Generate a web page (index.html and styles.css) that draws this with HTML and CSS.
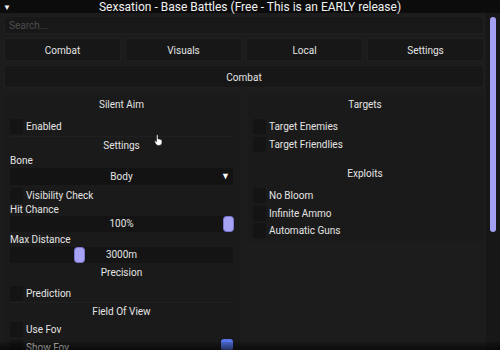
FILE: index.html
```html
<!DOCTYPE html>
<html>
<head>
    <title>Sexsation</title>
    <link rel="stylesheet" href="styles.css">
</head>
<body>
    <div id="window">
        <div id="titleBar">
            <span class="arrow">▼</span>
            <span class="title">Sexsation - Base Battles (Free - This is an EARLY release)</span>
            <span></span>
        </div>
        <div id="mainDiv">
            <div id="content">
                <div id="searchBox">Search...</div>
                <div id="tabs">
                    <div class="tab">Combat</div>
                    <div class="tab">Visuals</div>
                    <div class="tab">Local</div>
                    <div class="tab">Settings</div>
                </div>
                <div id="pageHeader">Combat</div>
                <div id="columns">
                    <div class="column">
                        <div class="head">Silent Aim</div>
                        <div class="check first"><span class="box"></span>Enabled</div>
                        <div class="sub">Settings</div>
                        <div class="label bone">Bone</div>
                        <div class="dropdown"><span></span><span>Body</span><span class="drop">▼</span></div>
                        <div class="check first"><span class="box"></span>Visibility Check</div>
                        <div class="label hit">Hit Chance</div>
                        <div class="slider">100%<span class="knob" style="left: 214px"></span></div>
                        <div class="label">Max Distance</div>
                        <div class="slider">3000m<span class="knob" style="left: 65px"></span></div>
                        <div class="sub precision">Precision</div>
                        <div class="check first tall"><span class="box"></span>Prediction</div>
                        <div class="sub tall">Field Of View</div>
                        <div class="check tall"><span class="box"></span>Use Fov</div>
                        <div class="check tall"><span class="box"></span>Show Fov<span class="swatch"></span></div>
                    </div>
                    <div class="column right">
                        <div class="head">Targets</div>
                        <div class="check first"><span class="box"></span>Target Enemies</div>
                        <div class="check"><span class="box"></span>Target Friendlies</div>
                        <div class="head exploits">Exploits</div>
                        <div class="check first"><span class="box"></span>No Bloom</div>
                        <div class="check"><span class="box"></span>Infinite Ammo</div>
                        <div class="check"><span class="box"></span>Automatic Guns</div>
                    </div>
                </div>
            </div>
            <div id="scrollTrack">
                <div id="scrollThumb"></div>
            </div>
        </div>
        <svg id="cursor" width="9" height="12" viewBox="0 0 9 12">
            <path d="M2.5 1 Q3.5 0.3 4 1 L4 5 L5 5 Q6 4.8 6.3 5.5 L7 5.6 Q8 5.8 8 7 L8 9 Q7.5 11.5 5 11.5 L4 11.5 Q2.5 11.3 1.5 9.5 L0.6 7.5 Q0.5 6.6 1.5 6.8 L2.5 7.8 Z" fill="#ffffff" stroke="#222" stroke-width="0.6"/>
        </svg>
        <div id="fade"></div>
    </div>
</body>
</html>
```

FILE: styles.css
```css
body{
    margin: 0px;
    background-color: #000000;
    font-family: Roboto, "Liberation Sans", Arial, sans-serif;
    font-size: 10px;
    color: #e4e4e4;
}

#window{
    position: relative;
    width: 500px;
    height: 350px;
    overflow: hidden;
    background-color: #1c1c1c;
}

#titleBar{
    display: grid;
    grid-template-columns: 1fr auto 1fr;
    align-items: center;
    height: 13px;
    background-color: #0c0c0c;
}

.arrow{
    font-size: 8px;
    padding-left: 3px;
    color: #f2f2f2;
}

.title{
    font-size: 12px;
    color: #f0f0f0;
}

#mainDiv{
    display: flex;
    flex-direction: row;
}

#content{
    width: 480px;
    padding: 0px 2px 0px 4px;
}

#searchBox{
    height: 18px;
    margin-top: 3px;
    padding-left: 4px;
    line-height: 18px;
    color: #4c4c4c;
    background-color: #181818;
    border: 1px solid #1f1f1f;
    box-sizing: border-box;
}

#tabs{
    display: grid;
    grid-template-columns: repeat(4, 1fr);
    gap: 4px;
    margin-top: 4px;
}

.tab{
    height: 23px;
    line-height: 23px;
    text-align: center;
    background-color: #171717;
    border: 1px solid #1f1f1f;
    box-sizing: border-box;
}

#pageHeader{
    height: 23px;
    margin-top: 4px;
    line-height: 23px;
    text-align: center;
    background-color: #171717;
    border: 1px solid #1f1f1f;
    box-sizing: border-box;
}

#columns{
    display: grid;
    grid-template-columns: 236px 1fr;
    gap: 7px;
    align-items: start;
    margin-top: 6px;
}

.column{
    display: flex;
    flex-direction: column;
    padding: 0px 7px 0px 6px;
    background-color: #1a1a1a;
}

.column.right{
    padding-bottom: 2px;
}

.head{
    height: 22px;
    line-height: 22px;
    text-align: center;
}

.head.exploits{
    margin-top: 10px;
}

.check{
    display: flex;
    flex-direction: row;
    align-items: center;
    gap: 3px;
    height: 17.5px;
}

.check.first{
    margin-top: 2px;
}

.check.tall{
    height: 18px;
}

.box{
    width: 13px;
    height: 15px;
    background-color: #141414;
}

.sub{
    height: 17px;
    line-height: 17px;
    text-align: center;
    border-top: 1px solid #202020;
    box-sizing: border-box;
}

.sub.precision{
    height: 18px;
    line-height: 18px;
    margin-top: 1px;
    border-top: none;
}

.sub.tall{
    height: 18px;
    line-height: 18px;
}

.label{
    height: 15px;
    line-height: 15px;
}

.label.hit{
    height: 12px;
    line-height: 12px;
}

.dropdown{
    display: grid;
    grid-template-columns: 1fr auto 1fr;
    align-items: center;
    height: 17px;
    text-align: center;
    background-color: #131313;
}

.drop{
    justify-self: end;
    padding-right: 3px;
    font-size: 9px;
    color: #ffffff;
}

.slider{
    position: relative;
    height: 16px;
    line-height: 16px;
    text-align: center;
    background-color: #141414;
}

.knob{
    position: absolute;
    top: 1px;
    width: 9px;
    height: 14px;
    border-radius: 3px;
    background-color: #a6a2f4;
    box-shadow: 0px 0px 0px 1px #7c78d0;
}

.swatch{
    align-self: flex-start;
    width: 12px;
    height: 12px;
    margin-left: auto;
    margin-top: 1px;
    border-radius: 3px;
    background-color: #5675ea;
}

#scrollTrack{
    width: 14px;
    height: 337px;
    background-color: #171717;
}

#scrollThumb{
    width: 6px;
    height: 215px;
    margin: 4px 0px 0px 4px;
    border-radius: 3px;
    background-color: #a39ff2;
}

#cursor{
    position: absolute;
    left: 154px;
    top: 134px;
}

#fade{
    position: absolute;
    left: 0px;
    bottom: 0px;
    width: 500px;
    height: 8px;
    background: linear-gradient(to bottom, rgba(0, 0, 0, 0.15), rgba(0, 0, 0, 0.6));
}
```
